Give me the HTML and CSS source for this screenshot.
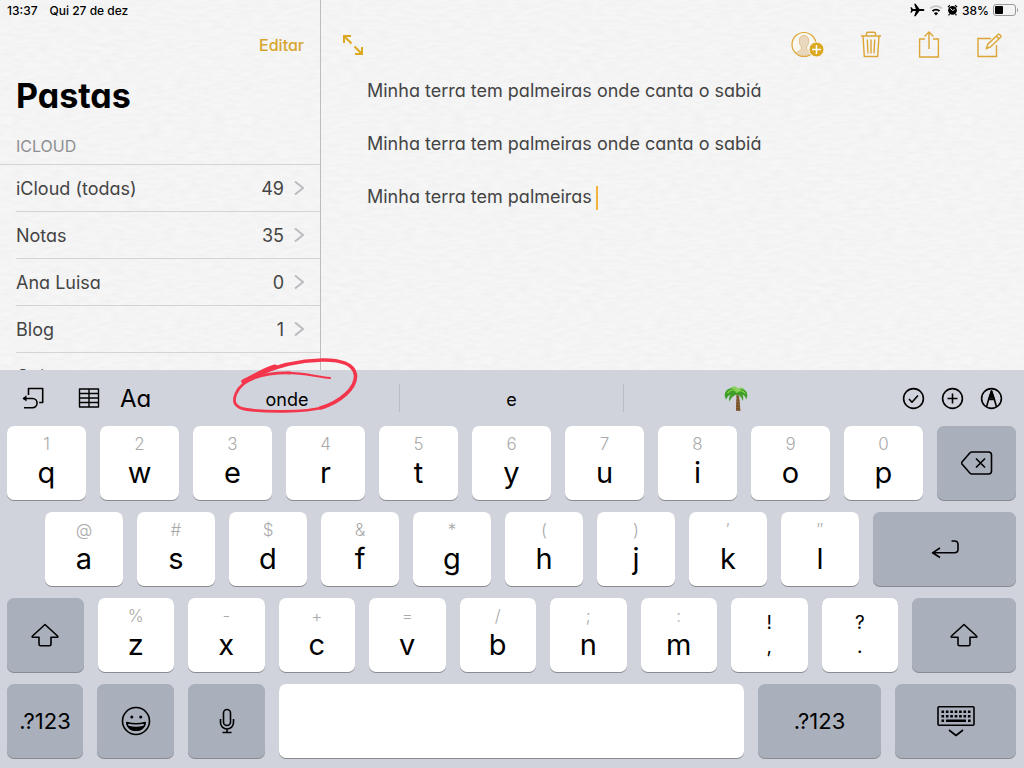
FILE: index.html
```html
<!DOCTYPE html>
<html lang="pt-BR">
<head>
<meta charset="utf-8">
<meta name="viewport" content="width=device-width, initial-scale=1">
<title>Notas</title>
<link rel="stylesheet" href="styles.css">
</head>
<body>
<main class="app">
  <aside class="sidebar">
    <div class="status"><span>13:37</span><span>Qui 27 de dez</span></div>
    <div class="sidebar-bar"><button class="edit" type="button">Editar</button></div>
    <h1 class="title">Pastas</h1>
    <h2 class="section">ICLOUD</h2>
    <ul class="folders">
      <li><a class="folder" href="#todas"><span class="name">iCloud (todas)</span><span>49</span><svg class="chevron" viewBox="0 0 10 16"><path d="M1 1.500 9 8l-8 6.500"/></svg></a></li>
      <li><a class="folder" href="#notas"><span class="name">Notas</span><span>35</span><svg class="chevron" viewBox="0 0 10 16"><path d="M1 1.500 9 8l-8 6.500"/></svg></a></li>
      <li><a class="folder" href="#ana"><span class="name">Ana Luisa</span><span>0</span><svg class="chevron" viewBox="0 0 10 16"><path d="M1 1.500 9 8l-8 6.500"/></svg></a></li>
      <li><a class="folder" href="#blog"><span class="name">Blog</span><span>1</span><svg class="chevron" viewBox="0 0 10 16"><path d="M1 1.500 9 8l-8 6.500"/></svg></a></li>
      <li><a class="folder" href="#coisas"><span class="name">Coisas</span></a></li>
    </ul>
  </aside>
  <section class="note">
    <div class="status status-right">
      <svg width="15" height="14" viewBox="0 0 15 14"><path d="M14.500 7c0-.7-.8-1.100-1.800-1.100H9.500L5.600.8H4.100l1.800 5.100H2.900L1.500 4.300H.4L1.200 7 .4 9.700h1.100l1.400-1.600h3L4.100 13.200h1.500l3.900-5.100h3.200c1 0 1.800-.4 1.800-1.100z"/></svg>
      <svg width="14" height="12" viewBox="0 0 14 12"><path d="M1.200 4.400a8.500 8.500 0 0 1 11.600 0" fill="none" stroke="#c4c4c4" stroke-width="1.800"/><path d="M3.500 7a5.200 5.200 0 0 1 7 0" fill="none" stroke="#000" stroke-width="1.900"/><path d="M7 11.400 4.900 9.200a3 3 0 0 1 4.200 0z"/></svg>
      <svg width="11" height="12" viewBox="0 0 11 12"><circle cx="5.500" cy="6.300" r="4.400"/><path d="M.9 3.100 2.900 1.300M10.100 3.100 8.100 1.300M2.500 10l-.9 1.300M8.500 10l.9 1.300" stroke="#000" stroke-width="1.200"/><path d="M3.400 4.200 5.500 6.600l2.200-1.400" fill="none" stroke="#f6f6f6"/></svg>
      <span class="percent">38%</span>
      <svg width="26" height="12" viewBox="0 0 26 12"><rect x=".5" y=".5" width="22" height="11" rx="2.500" fill="none" stroke="#999"/><rect x="2" y="2" width="8" height="8" rx="1"/><path d="M24 4c1.600.5 1.600 3.500 0 4z" fill="#999"/></svg>
    </div>
    <div class="note-bar">
      <button class="tool" type="button" aria-label="Expandir"><svg width="22" height="22" viewBox="0 0 22 22" fill="none" stroke="#dca81f" stroke-width="2"><path d="M2 9V2h7M2.500 2.500l7 7M20 13v7h-7M19.500 19.500l-7-7"/></svg></button>
      <div class="actions">
        <button class="tool" type="button" aria-label="Adicionar pessoas"><svg width="33" height="28" viewBox="0 0 33 28"><circle cx="13" cy="13.500" r="12" fill="#faf8f2" stroke="#dca535" stroke-width="1.200"/><path d="M13 4.500c3.300 0 4.900 2.300 4.700 5.600-.1 2.500-.8 4.500-2.100 5.600v2.200c.3 1.900 3.800 2.300 5.400 3.900-4.200 4-11.800 4-16 0 1.600-1.600 5.100-2 5.400-3.900v-2.200C9.100 14.600 8.400 12.600 8.300 10.100 8.100 6.800 9.700 4.500 13 4.500z" fill="#e9d8be" stroke="#dfb878" stroke-width=".8"/><circle cx="25.500" cy="18.500" r="7.500" fill="#dca81f" stroke="#f6f6f6"/><path d="M25.500 14v9M21 18.500h9" stroke="#fff" stroke-width="1.500"/></svg></button>
        <button class="tool" type="button" aria-label="Apagar"><svg width="22" height="28" viewBox="0 0 22 28" class="line"><path d="M1 5h20M3 5l1.300 20.500h13.400L19 5M6.500 5V2.500C6.500 1.500 7 1.200 8 1.200h6c1 0 1.500.3 1.500 1.300V5M7.300 8.500l.7 14M11 8.500v14M14.700 8.500l-.7 14"/></svg></button>
        <button class="tool" type="button" aria-label="Compartilhar"><svg width="22" height="28" viewBox="0 0 22 28" class="line"><path d="M7 8H1.600v18h18.800V8H15M11 18V1.500M6.500 5.500 11 1l4.500 4.500"/></svg></button>
        <button class="tool" type="button" aria-label="Nova nota"><svg width="26" height="28" viewBox="0 0 26 28" class="line"><path d="M15 7.500H2v18h18.500V14M10.500 17.500l1.300-4.300L22 3.500c1-1 3.800 1.300 2.800 2.500L14.600 16zM20.300 5l2.900 2.900"/></svg></button>
      </div>
    </div>
    <div class="editor" role="textbox" aria-multiline="true" aria-label="Nota" contenteditable="true" spellcheck="false">
      <p>Minha terra tem palmeiras onde canta o sabiá</p>
      <p>Minha terra tem palmeiras onde canta o sabiá</p>
      <p>Minha terra tem palmeiras<span class="caret"></span></p>
    </div>
  </section>
</main>

<section class="keyboard" aria-label="Teclado">
  <div class="suggest-bar">
    <div class="side left">
      <button class="tool" type="button" aria-label="Desfazer"><svg width="24" height="24" viewBox="0 0 24 24" class="ink"><path d="M7.500 9V2.500h14.200v14h-3.500M2 12.500h9.500a4.600 4.600 0 0 1 0 9.200H3"/><path d="M5.500 9.300 1.500 12.500l4 3z" fill="#000" stroke="none"/></svg></button>
      <button class="tool" type="button" aria-label="Tabela"><svg width="22" height="20" viewBox="0 0 22 20" class="ink table-icon"><path d="M1.500 1h19v18h-19zM11 1v18M1.500 5.500h19M1.500 10h19M1.500 14.500h19"/></svg></button>
      <button class="tool format" type="button">Aa</button>
    </div>
    <div class="suggestions">
      <button type="button">onde</button>
      <button type="button">e</button>
      <button type="button" aria-label="Palmeira"><svg width="26" height="26" viewBox="0 0 26 26"><path d="M13 7c1.300 5-.5 11 .2 18h4.300c-.8-6-.2-12-2.600-18z" fill="#8a6238"/><path d="M13.500 11h2.800M13.300 14h3M13 17h3.600M13 20h4M13 23h4" stroke="#5f3f22" stroke-width=".8"/><path d="M14 6C11 1 5 1 2.500 6 1 9 2 12 3.300 13.500 4 11 5.500 9.500 7.500 9 6 11 5.700 13 6.500 15.500 8.500 11 11 9 14 8.500c3 .5 5 3 5.500 6.500 1.200-2 1-4.500-.3-6.500 2 .5 3.500 2.500 4 5 1.800-3 1.600-7-1.400-9.500C19 2 16 3 14 6z" fill="#3f9e27"/><path d="M14 6.500C11.500 3 8 3 4.500 7M14 6.500C16 3.500 20 4 22 7.500M14 6c-1-3-3-4.500-5.500-4.500 3-.9 5.500.2 6.500 2.500C16 2 18.500 1.500 20.500 3" fill="none" stroke="#82d24c" stroke-width="1.300"/></svg></button>
    </div>
    <div class="side right">
      <button class="tool" type="button" aria-label="Lista"><svg width="23" height="23" viewBox="0 0 23 23" class="ink"><circle cx="11.500" cy="11.500" r="9.900"/><path d="m7 12 3 3.200L16 8.500"/></svg></button>
      <button class="tool" type="button" aria-label="Inserir"><svg width="23" height="23" viewBox="0 0 23 23" class="ink"><circle cx="11.500" cy="11.500" r="9.900"/><path d="M11.500 6.500v10M6.500 11.500h10"/></svg></button>
      <button class="tool" type="button" aria-label="Desenhar"><svg width="23" height="23" viewBox="0 0 23 23" class="ink"><circle cx="11.500" cy="11.500" r="9.900"/><path d="M6.500 20 9 11l2.500-7 2.500 7 2.500 9M9 12.500h5"/><path d="M9.500 11 11.500 4l2 7z" fill="#000"/></svg></button>
    </div>
  </div>
  <div class="rows">
    <div class="row">
      <button class="key"><small>1</small>q</button><button class="key"><small>2</small>w</button><button class="key"><small>3</small>e</button><button class="key"><small>4</small>r</button><button class="key"><small>5</small>t</button><button class="key"><small>6</small>y</button><button class="key"><small>7</small>u</button><button class="key"><small>8</small>i</button><button class="key"><small>9</small>o</button><button class="key"><small>0</small>p</button>
      <button class="key dark" aria-label="Apagar"><svg width="32" height="24" viewBox="0 0 32 24" class="ink"><path d="M11 1h16.500A3 3 0 0 1 30.500 4v16a3 3 0 0 1-3 3H11c-1 0-1.600-.4-2.200-1L1 13c-.6-.7-.6-1.300 0-2L8.800 2c.6-.6 1.200-1 2.200-1zM15 7.500l9 9M24 7.500l-9 9"/></svg></button>
    </div>
    <div class="row row-home">
      <button class="key"><small>@</small>a</button><button class="key"><small>#</small>s</button><button class="key"><small>$</small>d</button><button class="key"><small>&amp;</small>f</button><button class="key"><small>*</small>g</button><button class="key"><small>(</small>h</button><button class="key"><small>)</small>j</button><button class="key"><small>′</small>k</button><button class="key"><small>″</small>l</button>
      <button class="key dark return" aria-label="Retorno"><svg width="28" height="20" viewBox="0 0 28 20" class="ink"><path d="M20.500 2h3c2.500 0 3.500 1 3.500 3.500v4.800c0 2.500-1 3.500-3.500 3.500H1.500M9 9l-7.500 4.800L9 18.500"/></svg></button>
    </div>
    <div class="row row-low">
      <button class="key dark" aria-label="Maiúsculas"><svg width="28" height="24" viewBox="0 0 28 24" class="ink"><path d="M14 1.500 1.500 13c-.6.6-.4 1.300.5 1.300h6v6.900c0 1 .6 1.600 1.600 1.600h8.800c1 0 1.600-.6 1.600-1.600v-6.900h6c.9 0 1.100-.7.5-1.300z"/></svg></button>
      <button class="key"><small>%</small>z</button><button class="key"><small>-</small>x</button><button class="key"><small>+</small>c</button><button class="key"><small>=</small>v</button><button class="key"><small>/</small>b</button><button class="key"><small>;</small>n</button><button class="key"><small>:</small>m</button>
      <button class="key pair"><span>!</span><span>,</span></button><button class="key pair"><span>?</span><span>.</span></button>
      <button class="key dark shift-right" aria-label="Maiúsculas"><svg width="28" height="24" viewBox="0 0 28 24" class="ink"><path d="M14 1.500 1.500 13c-.6.6-.4 1.300.5 1.300h6v6.900c0 1 .6 1.600 1.600 1.600h8.800c1 0 1.600-.6 1.600-1.600v-6.900h6c.9 0 1.100-.7.5-1.300z"/></svg></button>
    </div>
    <div class="row row-space">
      <button class="key dark mode">.?123</button>
      <button class="key dark" aria-label="Emoji"><svg width="30" height="30" viewBox="0 0 30 30" class="ink"><circle cx="15" cy="15" r="13.500"/><path d="M5.800 16.500c6 1.600 12.400 1.600 18.400 0-.4 10.200-18 10.200-18.400 0z"/><path d="M7.500 20.500c4.500 1.200 10.500 1.200 15 0-2.500 5-12.500 5-15 0z" fill="#000"/><circle cx="10.800" cy="11" r="1.500" fill="#000" stroke="none"/><circle cx="19.700" cy="11" r="1.500" fill="#000" stroke="none"/></svg></button>
      <button class="key dark" aria-label="Ditado"><svg width="16" height="26" viewBox="0 0 16 26" class="ink"><rect x="4.500" y="1.500" width="7" height="16" rx="3.500"/><path d="M1.500 11v3.500a6.500 6.500 0 0 0 13 0V11M8 21v3.500M3.500 24.500h9"/></svg></button>
      <button class="key space" aria-label="Espaço"></button>
      <button class="key dark mode wide">.?123</button>
      <button class="key dark hide" aria-label="Ocultar teclado"><svg width="38" height="32" viewBox="0 0 38 32" class="ink"><rect x="1" y="1.800" width="36" height="18.500" rx="1"/><path d="M4.500 6.800h29M4.500 11.200h29" stroke-width="2.600" stroke-dasharray="2.600 1.800"/><path d="M4.500 15.800h2.600M9 15.800h20M31 15.800h2.600" stroke-width="2.600"/><path d="m12 25 7 5.500 7-5.500"/></svg></button>
    </div>
  </div>
  <svg class="scribble" viewBox="230 354 130 62" aria-hidden="true"><path d="M244 381.500C256 376 262 371 275 367" stroke-width="5"/><path d="M243 381.500C270 367 294 360.500 322 360c18-.3 32 4 33.500 15 1 13-15 27-35 33" stroke-width="3.600"/><path d="M325 407c-22 6-61 5-78 2.500-14-2-14-9-11-16 6-14 26-21 54-20.500" stroke-width="2.800"/><path d="M285 373c16-.6 30 3.500 45 5" stroke-width="2.200"/></svg>
</section>
</body>
</html>
```
FILE: styles.css
```css
* { box-sizing: border-box; }

body {
  margin: 0;
  height: 100vh;
  display: flex;
  flex-direction: column;
  overflow: hidden;
  font-family: Inter, "Liberation Sans", sans-serif;
  color: #444;
  background: #f6f6f6;
}

button {
  margin: 0;
  padding: 0;
  border: 0;
  background: none;
  font: inherit;
  color: inherit;
}

svg { display: block; flex: none; }

.app {
  flex: 1;
  min-height: 0;
  display: flex;
  overflow: hidden;
  font-feature-settings: "cv11";
  background-image: url("data:image/svg+xml,%3Csvg xmlns='http://www.w3.org/2000/svg' width='240' height='240'%3E%3Cfilter id='p'%3E%3CfeTurbulence type='fractalNoise' baseFrequency='.08 .3' numOctaves='2' stitchTiles='stitch'/%3E%3CfeColorMatrix values='0 0 0 0 0 0 0 0 0 0 0 0 0 0 0 .04 0 0 0 -.012'/%3E%3C/filter%3E%3Crect width='240' height='240' filter='url(%23p)'/%3E%3C/svg%3E");
}

.sidebar {
  flex: 0 0 321px;
  border-right: 1px solid #bdbdbd;
}

.status {
  display: flex;
  align-items: center;
  gap: 12px;
  height: 20px;
  padding: 0 7px;
  font-size: 12px;
  font-weight: 500;
  color: #000;
}

.status-right {
  justify-content: flex-end;
  gap: 4px;
  padding: 0 5px;
}

.sidebar-bar {
  display: flex;
  justify-content: flex-end;
  align-items: center;
  height: 50px;
  padding: 0 16px;
}

.edit {
  font-size: 16px;
  font-weight: 500;
  color: #d6a52c;
}

.title {
  margin: 0;
  padding: 5px 16px;
  font-size: 34px;
  line-height: 42px;
  font-weight: 700;
  color: #000;
}

.section {
  margin: 0;
  padding: 14px 16px 8px;
  font-size: 16px;
  line-height: 20px;
  font-weight: 400;
  color: #8e8e90;
}

.folders {
  margin: 0;
  padding: 0 0 0 16px;
  list-style: none;
  border-top: 1px solid #d4d4d4;
}

.folder {
  display: flex;
  align-items: center;
  gap: 10px;
  height: 47px;
  padding-right: 16px;
  border-bottom: 1px solid #d4d4d4;
  font-size: 18px;
  color: inherit;
  text-decoration: none;
}

.name { flex: 1; }

.chevron {
  width: 10px;
  height: 16px;
  fill: none;
  stroke: #bbbbc0;
  stroke-width: 2;
}

.note { flex: 1; min-width: 0; }

.note-bar {
  display: flex;
  align-items: center;
  justify-content: space-between;
  height: 50px;
  padding: 0 22px 0 21px;
}

.actions { display: flex; gap: 36px; }

.line {
  fill: none;
  stroke: #dca535;
  stroke-width: 1.4;
}

.editor {
  padding: 8px 46px;
  font-size: 18px;
  line-height: 26px;
  outline: none;
}

.editor p { margin: 0 0 27px; }

.caret {
  display: inline-block;
  width: 2px;
  height: 24px;
  margin-left: 4px;
  vertical-align: middle;
  background: #f0b43c;
}

.keyboard {
  position: relative;
  flex: none;
  background: #d0d3db;
  color: #000;
}

.suggest-bar {
  display: grid;
  grid-template-columns: 175px 1fr 177px;
  height: 56px;
}

.side { display: flex; align-items: center; }
.left { gap: 33px; padding-left: 21px; }
.right { justify-content: flex-end; gap: 16px; padding-right: 21px; }

.ink {
  fill: none;
  stroke: #000;
  stroke-width: 1.6;
  stroke-linejoin: round;
}

.table-icon { stroke-width: 1.4; }

.format {
  margin-left: -13px;
  font-size: 24px;
  font-feature-settings: "cv11";
}

.suggestions {
  display: grid;
  grid-template-columns: repeat(3, 1fr);
  align-items: center;
}

.suggestions button {
  display: flex;
  align-items: center;
  justify-content: center;
  height: 28px;
  padding-top: 2px;
  font-size: 18px;
}

.suggestions button + button { border-left: 1px solid #b9bcc4; }

.rows {
  display: flex;
  flex-direction: column;
  gap: 12px;
  padding: 0 8px 10px 7px;
}

.row { display: flex; gap: 14px; }
.row-home { padding-left: 38px; }

.key {
  display: flex;
  flex: 79 1 0;
  min-width: 0;
  flex-direction: column;
  align-items: center;
  justify-content: center;
  height: 74px;
  border-radius: 7px;
  background: #fff;
  box-shadow: 0 1px 0 #898b90;
  font-size: 29px;
  line-height: 38px;
}

.key small {
  font-size: 17px;
  line-height: 20px;
  font-weight: 300;
  color: #aaa;
}

.dark { background: #a9afbb; }
.pair { font-size: 19px; line-height: 24px; }
.mode { font-size: 22px; }

.row-home .key { flex-grow: 78; }
.row-home .return { flex-grow: 143; }
.row-low .key { flex-grow: 153; }
.row-low .shift-right { flex-grow: 208; }
.row-space .key { flex-grow: 77; }
.row-space .key:first-child { flex-grow: 76; }
.row-space .space { flex-grow: 465; }
.row-space .wide { flex-grow: 123; }
.row-space .hide { flex-grow: 121; }

/* Hand-drawn ring around the first suggestion */
.scribble {
  position: absolute;
  left: 230px;
  top: -16px;
  width: 130px;
  height: 62px;
  fill: none;
  stroke: #f4364c;
  stroke-linecap: round;
  pointer-events: none;
}
```
